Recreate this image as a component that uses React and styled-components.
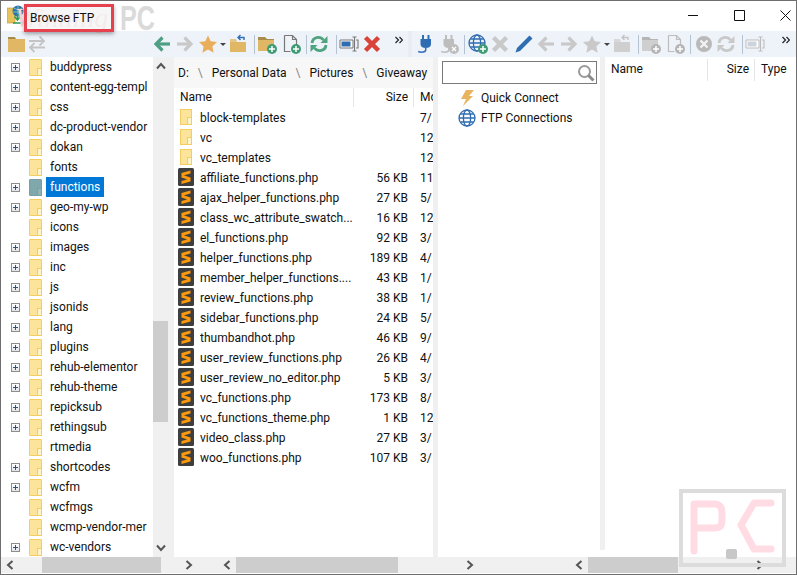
import styled, { createGlobalStyle } from 'styled-components';

const GlobalStyle = createGlobalStyle`
  html, body { margin: 0; padding: 0; background: #fff; }
  body { font-family: Roboto, "Noto Sans", "Liberation Sans", sans-serif; font-size: 12px; color: #111; }
  * { box-sizing: border-box; }
`;

const Window = styled.div`
  position: relative;
  width: 797px;
  height: 575px;
  display: flex;
  flex-direction: column;
  border: 1px solid #6e6e6e;
  background: #fff;
  overflow: hidden;
`;

const TitleBar = styled.div`
  display: flex;
  align-items: flex-start;
  height: 30px;
  flex: none;
`;

const AppIconBox = styled.div`
  width: 23px;
  padding: 4px 0 0 6px;
  flex: none;
`;

const TitleBox = styled.div`
  position: relative;
  z-index: 1;
  width: 90px;
  height: 28px;
  margin-top: 3px;
  padding-left: 3px;
  line-height: 22px;
  border: 3px solid #e5414e;
  background: rgba(242, 242, 242, 0.7);
  box-shadow: 0 2px 4px rgba(0, 0, 0, 0.35);
  white-space: nowrap;
`;

const ScriptMark = styled.div`
  position: absolute;
  left: 14px;
  top: 2px;
  font-family: "Liberation Serif", serif;
  font-style: italic;
  font-size: 28px;
  line-height: 30px;
  color: #f8d8d8;
`;

const BrandMark = styled.div`
  margin-left: 6px;
  font-family: "Liberation Sans", sans-serif;
  font-weight: 700;
  font-size: 35px;
  line-height: 34px;
  color: #dadada;
  transform: scaleX(0.72);
  transform-origin: left center;
`;

const WindowControls = styled.div`
  display: flex;
  margin-left: auto;
  padding: 9px 5px 0 0;
  gap: 35px;
`;

const ToolbarRow = styled.div`
  display: flex;
  align-items: center;
  height: 26px;
  flex: none;
  background: #eef3fa;
`;

const LeftTools = styled.div`
  display: flex;
  align-items: center;
  width: 149px;
  flex: none;
`;

const ToolBand = styled.div`
  width: 4px;
  height: 26px;
  margin-left: 5px;
  background: #e9edf3;
  flex: none;
`;

const Tool = styled.svg`
  width: ${({ $w }) => $w || 20}px;
  height: 20px;
  margin-left: ${({ $gap }) => $gap || 0}px;
  flex: none;
`;

const ToolSep = styled.div`
  width: 1px;
  height: 19px;
  margin-left: ${({ $gap }) => $gap}px;
  background: #b4c2d2;
  flex: none;
`;

const Panes = styled.div`
  display: flex;
  height: 500px;
  flex: none;
`;

const TreePane = styled.div`
  width: 152px;
  flex: none;
  overflow: hidden;
`;

const TreeRow = styled.div`
  display: flex;
  align-items: center;
  height: 20px;
  white-space: nowrap;
`;

const Expander = styled.div`
  position: relative;
  width: 9px;
  height: 9px;
  margin-left: 10px;
  border: 1px solid #8d8d8d;
  background: linear-gradient(#fff, #e4e4e4);
  flex: none;
  visibility: ${({ $hidden }) => ($hidden ? 'hidden' : 'visible')};
  &::before {
    content: '';
    position: absolute;
    left: 1px;
    top: 3px;
    width: 5px;
    height: 1px;
    background: #2f4f8f;
  }
  &::after {
    content: '';
    position: absolute;
    left: 3px;
    top: 1px;
    width: 1px;
    height: 5px;
    background: #2f4f8f;
  }
`;

const TreeFolder = styled.div`
  position: relative;
  width: 13px;
  height: 17px;
  margin-left: 9px;
  flex: none;
  border: 1px solid ${({ $active }) => ($active ? '#78a0a4' : '#f3cd62')};
  border-radius: 1px;
  background: ${({ $active }) => ($active ? '#7ea8ac' : '#fce49a')};
  &::after {
    content: '';
    position: absolute;
    right: -1px;
    bottom: -1px;
    width: 3px;
    height: 6px;
    border: 1px solid ${({ $active }) => ($active ? '#78a0a4' : '#f3cd62')};
    background: ${({ $active }) => ($active ? '#8fb4b8' : '#fff3c8')};
  }
`;

const TreeLabel = styled.span`
  margin-left: 4px;
  padding: 0 4px;
  height: 20px;
  line-height: 20px;
  background: ${({ $active }) => ($active ? '#0078d7' : 'transparent')};
  color: ${({ $active }) => ($active ? '#fff' : '#111')};
`;

const TreeScroll = styled.div`
  display: flex;
  flex-direction: column;
  width: 21px;
  flex: none;
  background: #f0f0f0;
`;

const ScrollArrowBox = styled.div`
  display: flex;
  justify-content: center;
  width: 15px;
  padding: ${({ $pad }) => $pad};
  flex: none;
`;

const TreeThumb = styled.div`
  width: 15px;
  height: 101px;
  margin-top: 251px;
  background: #cdcdcd;
  flex: none;
`;

const ScrollSpacer = styled.div`
  flex: 1;
`;

const ListPane = styled.div`
  width: 259px;
  flex: none;
  overflow: hidden;
`;

const Crumbs = styled.div`
  display: flex;
  align-items: center;
  height: 31px;
  padding-left: 4px;
  background: #f7f7f7;
  white-space: nowrap;
`;

const Crumb = styled.span`
  margin-right: 9px;
`;

const CrumbSlash = styled.span`
  margin-right: 9px;
  color: #8a8a8a;
`;

const ListHeader = styled.div`
  display: flex;
  height: 19px;
  white-space: nowrap;
`;

const HeadCell = styled.div`
  width: ${({ $w }) => $w}px;
  height: 100%;
  line-height: ${({ $lh }) => $lh || 20}px;
  padding: ${({ $pad }) => $pad || '0'};
  text-align: ${({ $right }) => ($right ? 'right' : 'left')};
  border-right: ${({ $line }) => ($line ? '1px solid #e5e5e5' : 'none')};
  flex: none;
`;

const FileRow = styled.div`
  display: flex;
  align-items: center;
  height: 20px;
  white-space: nowrap;
`;

const FileIconBox = styled.div`
  display: flex;
  justify-content: center;
  width: 24px;
  flex: none;
`;

const SmallFolder = styled.div`
  position: relative;
  width: 12px;
  height: 16px;
  border: 1px solid #f3cd62;
  background: #fce49a;
  &::after {
    content: '';
    position: absolute;
    right: -1px;
    bottom: -1px;
    width: 3px;
    height: 6px;
    border: 1px solid #f3cd62;
    background: #fff3c8;
  }
`;

const FileName = styled.div`
  width: 155px;
  margin-left: 2px;
  padding-top: 2px;
  flex: none;
  overflow: hidden;
`;

const FileSize = styled.div`
  width: 53px;
  padding-top: 2px;
  text-align: right;
  flex: none;
`;

const FileDate = styled.div`
  margin-left: 12px;
  padding-top: 2px;
  flex: none;
`;

const Splitter = styled.div`
  width: 5px;
  height: ${({ $short }) => ($short ? '493px' : '500px')};
  background: #f0f0f0;
  flex: none;
`;

const FtpPane = styled.div`
  width: 162px;
  flex: none;
`;

const SearchBox = styled.div`
  display: flex;
  align-items: center;
  justify-content: flex-end;
  width: 155px;
  height: 23px;
  margin: 4px 0 0 4px;
  padding-right: 1px;
  border: 1px solid #7a7a7a;
`;

const FtpList = styled.div`
  margin-top: 4px;
`;

const FtpItem = styled.div`
  display: flex;
  align-items: center;
  height: 20px;
  padding-left: 20px;
`;

const FtpIcon = styled.svg`
  width: 18px;
  height: 18px;
  margin-right: 5px;
  flex: none;
`;

const RemotePane = styled.div`
  flex: 1;
  padding-top: 2px;
`;

const RemoteHeader = styled.div`
  display: flex;
  height: 22px;
  white-space: nowrap;
`;

const BottomBar = styled.div`
  display: flex;
  align-items: center;
  height: 16px;
  background: #f0f0f0;
  flex: none;
`;

const HThumb = styled.div`
  width: ${({ $w }) => $w}px;
  height: 16px;
  margin-left: ${({ $gap }) => $gap}px;
  background: #cdcdcd;
  flex: none;
`;

const Chevron = styled.svg`
  width: 8px;
  height: 10px;
  margin-left: ${({ $gap }) => $gap || 0}px;
  flex: none;
`;

const CornerMark = styled.svg`
  position: absolute;
  left: 678px;
  top: 488px;
  width: 107px;
  height: 78px;
`;

const treeItems = [
  ['buddypress', 1], ['content-egg-templ', 1], ['css', 1], ['dc-product-vendor', 1], ['dokan', 1],
  ['fonts', 0], ['functions', 1], ['geo-my-wp', 1], ['icons', 0], ['images', 1], ['inc', 1], ['js', 1],
  ['jsonids', 1], ['lang', 1], ['plugins', 1], ['rehub-elementor', 1], ['rehub-theme', 1], ['repicksub', 1],
  ['rethingsub', 1], ['rtmedia', 0], ['shortcodes', 1], ['wcfm', 1], ['wcfmgs', 0], ['wcmp-vendor-mer', 0], ['wc-vendors', 1],
];

const files = [
  { name: 'block-templates', date: '7/', folder: true },
  { name: 'vc', date: '12', folder: true },
  { name: 'vc_templates', date: '12', folder: true },
  { name: 'affiliate_functions.php', size: '56 KB', date: '11' },
  { name: 'ajax_helper_functions.php', size: '27 KB', date: '5/' },
  { name: 'class_wc_attribute_swatch...', size: '16 KB', date: '12' },
  { name: 'el_functions.php', size: '92 KB', date: '3/' },
  { name: 'helper_functions.php', size: '189 KB', date: '4/' },
  { name: 'member_helper_functions....', size: '43 KB', date: '1/' },
  { name: 'review_functions.php', size: '38 KB', date: '1/' },
  { name: 'sidebar_functions.php', size: '24 KB', date: '5/' },
  { name: 'thumbandhot.php', size: '46 KB', date: '9/' },
  { name: 'user_review_functions.php', size: '26 KB', date: '4/' },
  { name: 'user_review_no_editor.php', size: '5 KB', date: '3/' },
  { name: 'vc_functions.php', size: '173 KB', date: '8/' },
  { name: 'vc_functions_theme.php', size: '1 KB', date: '12' },
  { name: 'video_class.php', size: '27 KB', date: '3/' },
  { name: 'woo_functions.php', size: '107 KB', date: '3/' },
];

const GREEN = '#4f9f82';
const GRAY = '#c9c9c9';
const BLUE = '#2f6db3';

const Badge = ({ color = '#3f9b74', mark = 'plus' }) => (
  <>
    <circle cx="15" cy="15" r="5" fill={color} />
    {mark === 'plus' ? (
      <path d="M15 12v6M12 15h6" stroke="#fff" strokeWidth="1.5" />
    ) : (
      <path d="M13 13l4 4M17 13l-4 4" stroke="#fff" strokeWidth="1.3" />
    )}
  </>
);

const ArrowTool = ({ color, flip, gap }) => (
  <Tool $gap={gap} viewBox="0 0 20 20">
    <g transform={flip ? 'matrix(-1 0 0 1 20 0)' : undefined} fill="none" stroke={color} strokeWidth="3.2">
      <path d="M18 10H4" />
      <path d="M10.5 3.5L4 10l6.5 6.5" />
    </g>
  </Tool>
);

const StarTool = ({ color, gap }) => (
  <Tool $gap={gap} viewBox="0 0 20 20">
    <path d="M10 1.5l2.7 5.8 6.3.8-4.6 4.3 1.2 6.3L10 15.6l-5.6 3.1 1.2-6.3L1 8.1l6.3-.8z" fill={color} />
  </Tool>
);

const Caret = ({ gap }) => (
  <Tool $w={8} $gap={gap} viewBox="0 0 8 20">
    <path d="M1 9h6l-3 3z" fill="#444" />
  </Tool>
);

const FolderUpTool = ({ body, arrow, gap }) => (
  <Tool $gap={gap} viewBox="0 0 20 20">
    <path d="M2 8h16v10H2z" fill={body} />
    <path d="M2 5h6l1 3H2z" fill={body} opacity=".75" />
    <path d="M16 6V3.5H10M12.5 1L10 3.5 12.5 6" fill="none" stroke={arrow} strokeWidth="1.4" />
  </Tool>
);

const NewFolderTool = ({ body, tab, badge, gap }) => (
  <Tool $gap={gap} viewBox="0 0 20 20">
    <path d="M1 3h7l2 2h7v4H1z" fill={tab} />
    <path d="M1 6h16v11H1z" fill={body} />
    <Badge color={badge} />
  </Tool>
);

const NewFileTool = ({ line, badge, gap }) => (
  <Tool $gap={gap} viewBox="0 0 20 20">
    <path d="M3.5 1.5h8l4 4v7M3.5 1.5v16h6M11.5 1.5v4h4" fill="none" stroke={line} strokeWidth="1.2" />
    <Badge color={badge} />
  </Tool>
);

const RefreshTool = ({ color, gap }) => (
  <Tool $gap={gap} viewBox="0 0 20 20">
    <g fill="none" stroke={color} strokeWidth="2.8">
      <path d="M3 9c.6-6 8-7.500 11.500-3" />
      <path d="M17 11c-.6 6-8 7.500-11.500 3" />
    </g>
    <path d="M18.500 2v7h-7zM1.500 18v-7h7z" fill={color} />
  </Tool>
);

const RenameTool = ({ fill, line, gap }) => (
  <Tool $gap={gap} viewBox="0 0 20 20">
    <path d="M1 6h13v8H1z" fill="#fff" stroke={line} />
    <path d="M2.500 7.500h9v5h-9z" fill={fill} />
    <path d="M13.500 3h4M13.500 17h4M15.500 3v14M17 6h2v8h-2" fill="none" stroke={line} strokeWidth="1.1" />
  </Tool>
);

const CrossTool = ({ color, gap }) => (
  <Tool $gap={gap} viewBox="0 0 20 20">
    <path d="M3.500 3.500l13 13M16.500 3.500l-13 13" stroke={color} strokeWidth="4.500" />
  </Tool>
);

const MoreTool = ({ gap }) => (
  <Tool $w={8} $gap={gap} viewBox="0 0 8 20">
    <path d="M0.500 3l3 3-3 3M4.500 3l3 3-3 3" fill="none" stroke="#222" strokeWidth="1.200" />
  </Tool>
);

const PlugTool = ({ color, off, gap }) => (
  <Tool $gap={gap} viewBox="0 0 20 20">
    <path d="M7 1v4M12.500 1v4" stroke={color} strokeWidth="2" />
    <path d="M4.500 5h10.500v5c0 2.500-2 4-5.250 4S4.500 12.500 4.500 10z" fill={color} />
    <path d="M9.700 14v2c0 2.500-5 2.500-7.500 1.500" fill="none" stroke={color} strokeWidth="1.500" />
    {off && <Badge color="#bdbdbd" mark="x" />}
  </Tool>
);

const GlobeLines = ({ color }) => (
  <g fill="none" stroke={color} strokeWidth="1.300">
    <circle cx="9" cy="9" r="8" />
    <ellipse cx="9" cy="9" rx="3.600" ry="8" />
    <path d="M1 9h16M2.300 5h13.400M2.300 13h13.400" />
  </g>
);

const GlobeTool = ({ gap }) => (
  <Tool $gap={gap} viewBox="0 0 20 20">
    <GlobeLines color="#2f6db3" />
    <Badge />
  </Tool>
);

const PencilTool = ({ color, gap }) => (
  <Tool $gap={gap} viewBox="0 0 20 20">
    <path d="M15.500 1.500l3 3L6 17l-4.500 1.500L3 14z" fill={color} />
  </Tool>
);

const StopTool = ({ gap }) => (
  <Tool $gap={gap} viewBox="0 0 20 20">
    <circle cx="10" cy="10" r="8" fill="#b9b9b9" />
    <path d="M6.500 6.500l7 7M13.500 6.500l-7 7" stroke="#f2f2f2" strokeWidth="2.400" />
  </Tool>
);

const FolderTool = ({ gap }) => (
  <Tool $gap={gap} viewBox="0 0 20 20">
    <path d="M2 3h7l1 2H2z" fill="#a88c4a" />
    <path d="M2 5h17v13H2z" fill="#dfb765" />
  </Tool>
);

const SwapTool = ({ gap }) => (
  <Tool $gap={gap} viewBox="0 0 20 20">
    <g fill="none" stroke="#c4c4c4" strokeWidth="1.800">
      <path d="M2 7h15M12.500 2.500L17 7l-4.500 4.500" />
      <path d="M18 13.500H3M7.500 9L3 13.500 7.500 18" />
    </g>
  </Tool>
);

const SublimeIcon = () => (
  <svg width="16" height="18" viewBox="0 0 16 18">
    <rect width="16" height="18" rx="1.500" fill="#3e3e3e" />
    <path d="M12.500 2.500v3L3.500 8V5zM3.500 6.500l9 3v3l-9-3zM12.500 10.500v3l-9 2.500v-3z" fill="#fb9a0e" />
  </svg>
);

const AppIcon = () => (
  <svg width="17" height="22" viewBox="0 0 17 22">
    <path d="M0 3h8v15H0z" fill="#e8c25a" stroke="#b7963c" strokeWidth=".6" />
    <circle cx="11" cy="6" r="5.500" fill="#2d6fb0" />
    <path d="M7 3c3 2 5 2 8 0M6 7h10M11 1v10" stroke="#8fd0a0" strokeWidth=".9" fill="none" />
    <path d="M10.500 9v5M7.500 11.500l3 3.500 3-3.500M6 18h9" stroke="#2f9a4c" strokeWidth="1.600" fill="none" />
  </svg>
);

const ChevronLeft = ({ gap }) => (
  <Chevron $gap={gap} viewBox="0 0 8 10">
    <path d="M6.500 1L2 5l4.500 4" fill="none" stroke="#555" strokeWidth="2" />
  </Chevron>
);

const ChevronRight = ({ gap }) => (
  <Chevron $gap={gap} viewBox="0 0 8 10">
    <path d="M1.500 1L6 5 1.500 9" fill="none" stroke="#555" strokeWidth="2" />
  </Chevron>
);

const ChevronUp = () => (
  <svg width="10" height="8" viewBox="0 0 10 8">
    <path d="M1 6.500L5 2l4 4.500" fill="none" stroke="#555" strokeWidth="2" />
  </svg>
);

const ChevronDown = () => (
  <svg width="10" height="8" viewBox="0 0 10 8">
    <path d="M1 1.500L5 6l4-4.500" fill="none" stroke="#555" strokeWidth="2" />
  </svg>
);

function App() {
  return (
    <>
      <GlobalStyle />
      <Window>
        <TitleBar>
          <AppIconBox>
            <AppIcon />
          </AppIconBox>
          <ScriptMark>Winning</ScriptMark>
          <TitleBox>Browse FTP</TitleBox>
          <BrandMark>PC</BrandMark>
          <WindowControls>
            <svg width="11" height="11" viewBox="0 0 11 11">
              <path d="M0 5.500h10" stroke="#111" />
            </svg>
            <svg width="11" height="11" viewBox="0 0 11 11">
              <path d="M.5.500h10v10H.5z" fill="none" stroke="#111" />
            </svg>
            <svg width="11" height="11" viewBox="0 0 11 11">
              <path d="M.5.500l10 10M10.500.500l-10 10" stroke="#111" />
            </svg>
          </WindowControls>
        </TitleBar>

        <ToolbarRow>
          <LeftTools>
            <FolderTool gap={5} />
            <SwapTool gap={1} />
          </LeftTools>
          <ArrowTool color={GREEN} gap={2} />
          <ArrowTool color={GRAY} flip gap={3} />
          <StarTool color="#e9ae5c" gap={3} />
          <Caret gap={1} />
          <FolderUpTool body="#dfb765" arrow={BLUE} gap={1} />
          <ToolSep $gap={6} />
          <NewFolderTool body="#dfb765" tab="#a88c4a" gap={2} />
          <NewFileTool line="#777" gap={4} />
          <ToolSep $gap={5} />
          <RefreshTool color="#4fa37f" gap={2} />
          <ToolSep $gap={7} />
          <RenameTool fill={BLUE} line="#777" gap={2} />
          <CrossTool color="#d8433a" gap={3} />
          <MoreTool gap={13} />
          <ToolBand />
          <PlugTool color={BLUE} gap={4} />
          <PlugTool color="#bdbdbd" off gap={3} />
          <ToolSep $gap={5} />
          <GlobeTool gap={3} />
          <CrossTool color={GRAY} gap={2} />
          <PencilTool color={BLUE} gap={4} />
          <ArrowTool color={GRAY} gap={2} />
          <ArrowTool color={GRAY} flip gap={3} />
          <StarTool color={GRAY} gap={3} />
          <Caret gap={1} />
          <FolderUpTool body="#cfcfcf" arrow="#c4c4c4" gap={1} />
          <ToolSep $gap={6} />
          <NewFolderTool body="#cfcfcf" tab="#b5b5b5" badge="#b5b5b5" gap={2} />
          <NewFileTool line="#bdbdbd" badge="#b5b5b5" gap={4} />
          <ToolSep $gap={5} />
          <StopTool gap={3} />
          <RefreshTool color={GRAY} gap={2} />
          <ToolSep $gap={6} />
          <RenameTool fill="#cdd3da" line="#bdbdbd" gap={2} />
          <MoreTool gap={17} />
        </ToolbarRow>

        <Panes>
          <TreePane>
            {treeItems.map(([name, hasChildren]) => (
              <TreeRow key={name}>
                <Expander $hidden={!hasChildren} />
                <TreeFolder $active={name === 'functions'} />
                <TreeLabel $active={name === 'functions'}>{name}</TreeLabel>
              </TreeRow>
            ))}
          </TreePane>

          <TreeScroll>
            <ScrollArrowBox $pad="5px 0 0">
              <ChevronUp />
            </ScrollArrowBox>
            <TreeThumb />
            <ScrollSpacer />
            <ScrollArrowBox $pad="0 0 5px">
              <ChevronDown />
            </ScrollArrowBox>
          </TreeScroll>

          <ListPane>
            <Crumbs>
              <Crumb>D:</Crumb>
              <CrumbSlash>\</CrumbSlash>
              <Crumb>Personal Data</Crumb>
              <CrumbSlash>\</CrumbSlash>
              <Crumb>Pictures</Crumb>
              <CrumbSlash>\</CrumbSlash>
              <Crumb>Giveaway</Crumb>
            </Crumbs>
            <ListHeader>
              <HeadCell $w={180} $lh={18} $pad="0 0 0 6px" $line>Name</HeadCell>
              <HeadCell $w={60} $lh={18} $pad="0 5px 0 0" $right $line>Size</HeadCell>
              <HeadCell $w={19} $lh={18} $pad="0 0 0 6px">Mo</HeadCell>
            </ListHeader>
            {files.map((file) => (
              <FileRow key={file.name}>
                <FileIconBox>{file.folder ? <SmallFolder /> : <SublimeIcon />}</FileIconBox>
                <FileName>{file.name}</FileName>
                <FileSize>{file.size}</FileSize>
                <FileDate>{file.date}</FileDate>
              </FileRow>
            ))}
          </ListPane>

          <Splitter />

          <FtpPane>
            <SearchBox>
              <svg width="18" height="18" viewBox="0 0 18 18">
                <circle cx="7.500" cy="7.500" r="5.500" fill="none" stroke="#9a9a9a" strokeWidth="2" />
                <path d="M11.500 11.500l5 5" stroke="#8a8a8a" strokeWidth="3" />
              </svg>
            </SearchBox>
            <FtpList>
              <FtpItem>
                <FtpIcon viewBox="0 0 18 18">
                  <path d="M8 1h8l-5 6h4L5 17l3-7H3z" fill="#e9b45f" />
                </FtpIcon>
                Quick Connect
              </FtpItem>
              <FtpItem>
                <FtpIcon viewBox="0 0 18 18">
                  <GlobeLines color="#2f6db3" />
                </FtpIcon>
                FTP Connections
              </FtpItem>
            </FtpList>
          </FtpPane>

          <Splitter $short />

          <RemotePane>
            <RemoteHeader>
              <HeadCell $w={103} $pad="0 0 0 6px" $line>Name</HeadCell>
              <HeadCell $w={47} $pad="0 5px 0 0" $right $line>Size</HeadCell>
              <HeadCell $w={41} $pad="0 0 0 6px">Type</HeadCell>
            </RemoteHeader>
          </RemotePane>
        </Panes>

        <BottomBar>
          <ChevronLeft gap={5} />
          <HThumb $gap={28} $w={119} />
          <ChevronRight gap={24} />
          <ChevronLeft gap={30} />
          <HThumb $gap={5} $w={162} />
          <ChevronRight gap={68} />
          <ChevronLeft gap={101} />
          <HThumb $gap={5} $w={90} />
          <ChevronRight gap={78} />
        </BottomBar>

        <CornerMark viewBox="0 0 107 78">
          <rect x="2" y="2" width="103" height="74" fill="none" stroke="#dcdcdc" strokeWidth="4" />
          <path d="M15 62V15h20c8 0 8 5 8 13s0 11-8 11H15" fill="none" stroke="#ffdbe3" strokeWidth="7" strokeLinecap="round" strokeLinejoin="round" />
          <path d="M92 14H75L62 36l13 24h17" fill="none" stroke="#ffdbe3" strokeWidth="7" strokeLinecap="round" strokeLinejoin="round" />
          <rect x="47" y="60" width="11" height="10" rx="2" fill="#c8c8c8" />
        </CornerMark>
      </Window>
    </>
  );
}

export default App;
